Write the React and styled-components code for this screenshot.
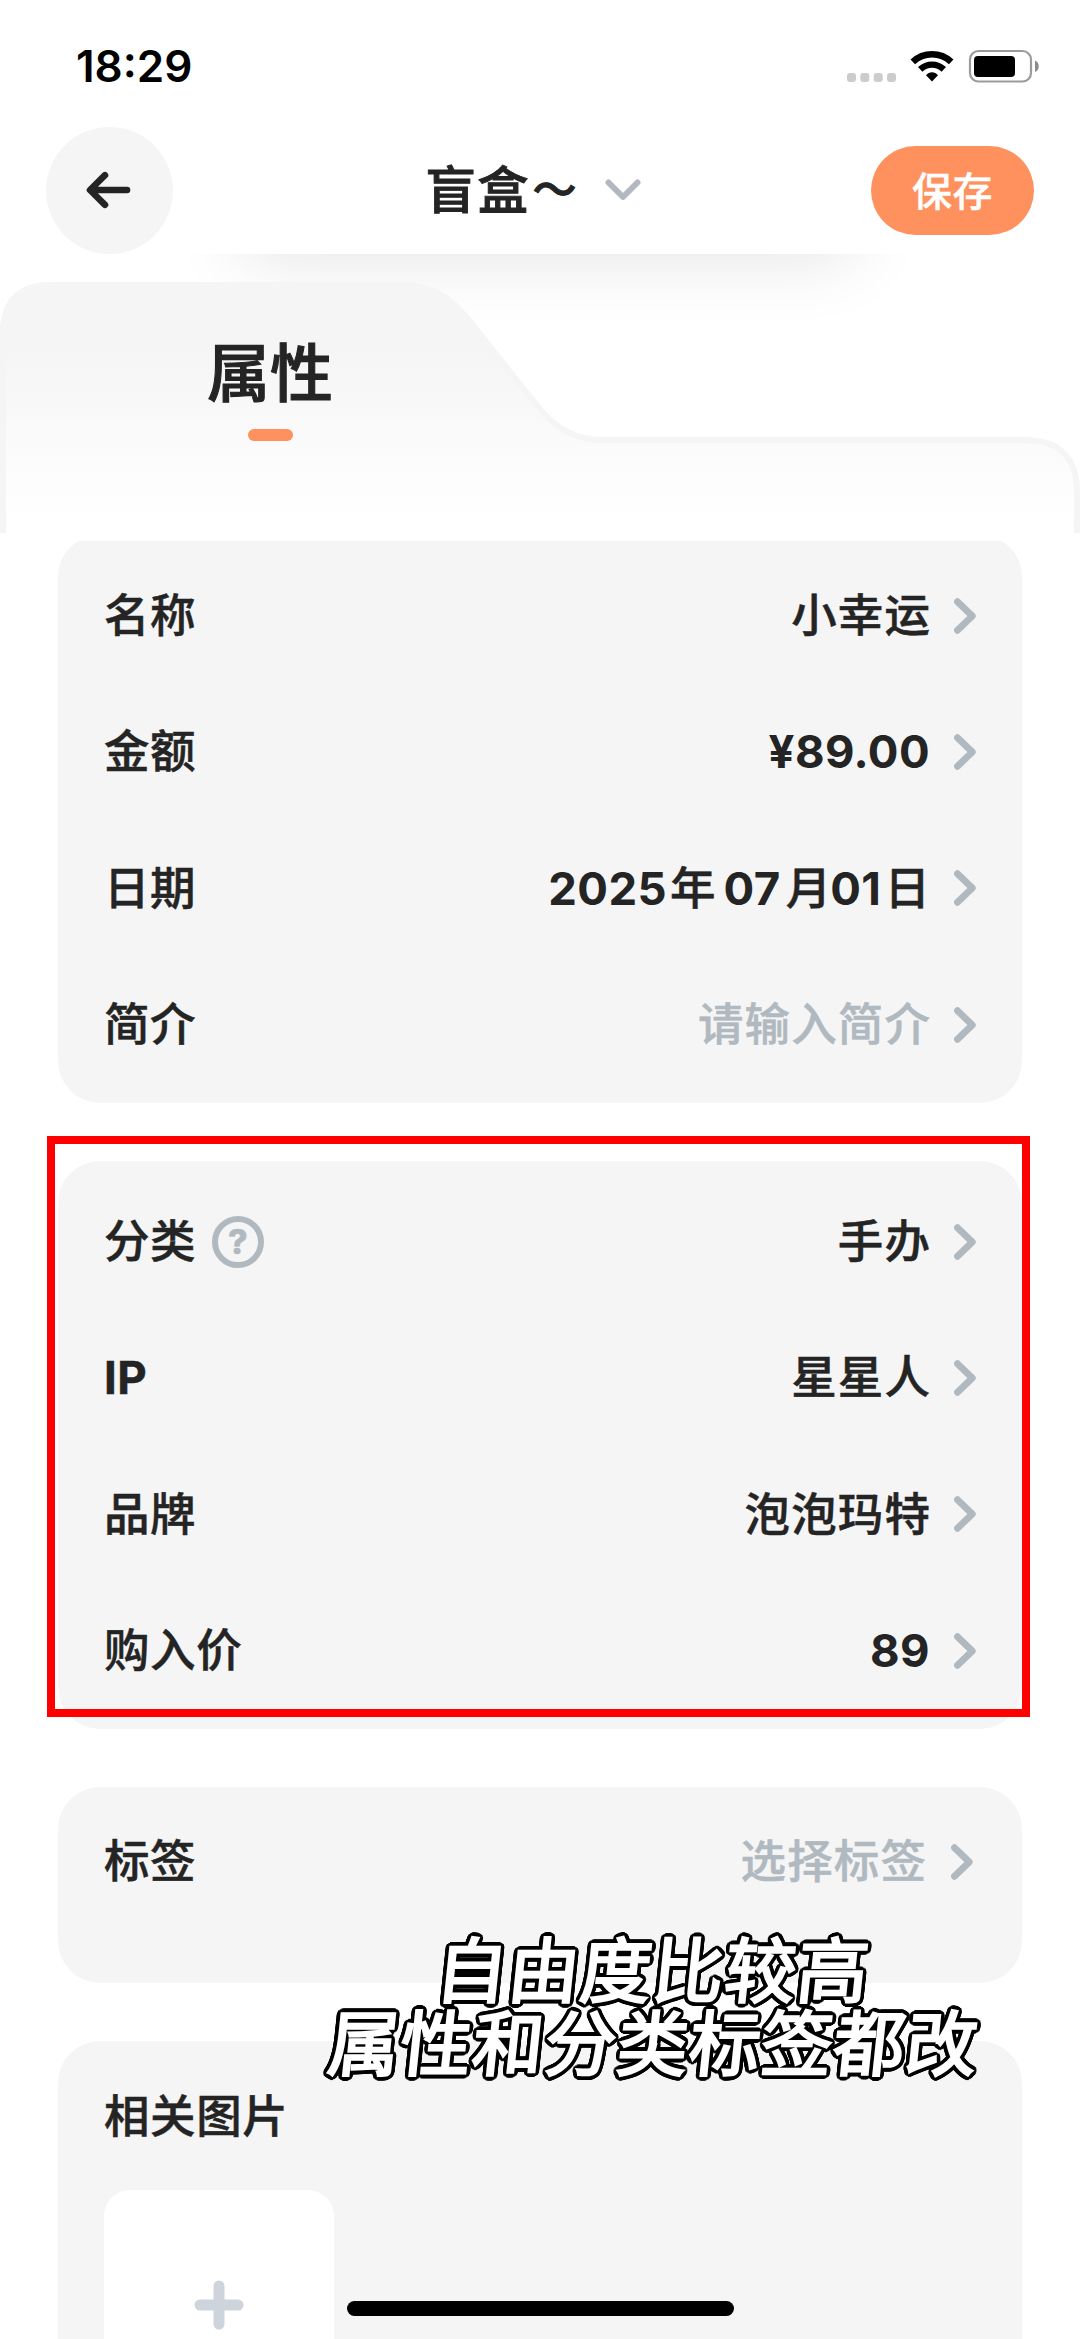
import React from 'react'
import styled, { createGlobalStyle } from 'styled-components'

const GlobalStyle = createGlobalStyle`
  * {
    box-sizing: border-box;
  }
  body {
    margin: 0;
    background-color: #fff;
    font-family: Inter, "Noto Sans CJK SC", sans-serif;
    color: #242424;
  }
`

const colors = {
  accent: '#ff915e',
  card: '#f5f5f5',
  text: '#242424',
  muted: '#b1b9c0',
}

const Screen = styled.div`
  position: relative;
  display: flex;
  flex-direction: column;
  width: 1080px;
  height: 2339px;
  overflow: hidden;
  background-color: #fff;
`

const StatusBar = styled.div`
  display: flex;
  justify-content: space-between;
  align-items: center;
  height: 126px;
  padding: 6px 40px 0 76px;
`

const Time = styled.span`
  font-size: 44px;
  font-weight: 600;
  line-height: 1;
  color: #000;
`

const StatusIcons = styled.div`
  display: flex;
  align-items: center;

  svg {
    display: block;
  }
`

const NavBar = styled.header`
  display: grid;
  grid-template-columns: 1fr auto 1fr;
  align-items: center;
  height: 128px;
  padding: 0 46px;
`

const BackButton = styled.button`
  display: flex;
  align-items: center;
  justify-content: center;
  width: 127px;
  height: 127px;
  padding: 0 3px 0 0;
  border: 0;
  border-radius: 50%;
  background-color: ${colors.card};
`

const NavTitle = styled.div`
  display: flex;
  align-items: center;
  padding-right: 14px;
  font-size: 51px;
  font-weight: 500;
  letter-spacing: 1.2px;
  line-height: 1;
  -webkit-text-stroke: 0.9px currentColor;

  svg {
    margin-left: 27px;
  }
`

const Tilde = styled.span`
  margin-left: 3px;
  font-size: 44px;
`

const SaveButton = styled.button`
  justify-self: end;
  width: 163px;
  height: 89px;
  padding: 0 0 3px;
  border: 0;
  border-radius: 45px;
  background-color: ${colors.accent};
  color: #fff;
  font-family: inherit;
  font-size: 40px;
  font-weight: 500;
  letter-spacing: 0.5px;
  -webkit-text-stroke: 0.4px currentColor;
`

const TabArea = styled.div`
  position: relative;
  flex: none;
  height: 287px;
  overflow: hidden;

  /* soft shadow under the nav bar */
  &::before {
    content: '';
    position: absolute;
    top: -200px;
    left: 242px;
    right: 226px;
    height: 200px;
    box-shadow: 0 0 76px rgba(0, 0, 0, 0.12);
  }
`

const TabShape = styled.svg`
  position: absolute;
  top: 0;
  left: 0;
  display: block;
`

const Tab = styled.div`
  position: relative;
  display: flex;
  flex-direction: column;
  align-items: center;
  width: 540px;
  padding-top: 88px;
  font-size: 63px;
  font-weight: 500;
  line-height: 62px;
  -webkit-text-stroke: 1.1px currentColor;

  &::after {
    content: '';
    width: 45px;
    height: 12px;
    margin-top: 25px;
    border-radius: 6px;
    background-color: ${colors.accent};
  }
`

const CardList = styled.main`
  flex: 1;
  display: flex;
  flex-direction: column;
  gap: 58px;
  overflow: hidden;
  padding: 0 58px;
`

const Card = styled.section`
  flex: none;
  height: ${({ $height }) => $height}px;
  padding: ${({ $top }) => $top || 12.5}px 46px 0;
  border-radius: 42px;
  background-color: ${colors.card};

  /* the list is scrolled a few pixels under the tab */
  &:first-child {
    margin-top: -6px;
  }
`

const RowWrapper = styled.div`
  display: flex;
  align-items: center;
  height: 136.4px;
  padding-right: ${({ $inset }) => $inset || 0}px;
  font-size: 45.5px;
  font-weight: 500;
  line-height: 1;
  -webkit-text-stroke: 0.5px currentColor;

  svg {
    flex: none;
    margin-left: ${({ $inset }) => ($inset ? 24 : 23)}px;
  }
`

const Label = styled.span`
  display: flex;
  align-items: center;
  margin-right: auto;
  font-weight: ${({ $latin }) => ($latin ? 700 : 500)};
  letter-spacing: 0.6px;
`

const Value = styled.span`
  color: ${({ $placeholder }) => ($placeholder ? colors.muted : colors.text)};
  letter-spacing: 1.1px;
`

const Digits = styled.span`
  margin-right: 1px;
  font-weight: 700;
  letter-spacing: 0.4px;
  -webkit-text-stroke: 0;
`

const DateUnit = styled.span`
  margin: 0 ${({ $after }) => $after || 0}px 0 ${({ $before }) => $before || 0}px;
`

const Help = styled.span`
  display: flex;
  align-items: center;
  justify-content: center;
  width: 52px;
  height: 52px;
  margin-left: 16px;
  border: 6px solid ${colors.muted};
  border-radius: 50%;
  color: ${colors.muted};
  font-size: 34px;
  font-weight: 800;
`

const AddTile = styled.button`
  display: flex;
  align-items: center;
  justify-content: center;
  width: 230px;
  height: 230px;
  margin-top: 5px;
  padding: 0;
  border: 0;
  border-radius: 26px;
  background-color: #fff;
`

const Highlight = styled.div`
  position: absolute;
  top: 1136px;
  left: 47px;
  width: 983px;
  height: 581px;
  border: 8px solid #ff0000;
`

// black outline built from shadows placed on a circle
const ring = Array.from({ length: 32 }, (_, i) => {
  const angle = (i / 32) * Math.PI * 2
  return `${(Math.cos(angle) * 4.8).toFixed(2)}px ${(Math.sin(angle) * 4.8).toFixed(2)}px 0 #000`
}).join(', ')

const Caption = styled.div`
  position: absolute;
  top: 1930px;
  left: 324px;
  width: 660px;
`

const CaptionLine = styled.div`
  margin-left: ${({ $shift }) => $shift || 0}px;
  text-align: center;
  color: #fff;
  font-family: "Noto Sans CJK SC", sans-serif;
  font-size: 71px;
  font-weight: 400;
  line-height: 73px;
  letter-spacing: 1.2px;
  white-space: nowrap;
  -webkit-text-stroke: 2.6px #fff;
  stroke-linejoin: round;
  text-shadow: ${ring};
  transform: skewX(-6deg);
`

const HomeIndicator = styled.div`
  position: absolute;
  bottom: 23px;
  left: 347px;
  width: 387px;
  height: 15px;
  border-radius: 8px;
  background-color: #000;
`

const Chevron = () => (
  <svg width="22" height="36" viewBox="0 0 22 36" fill="none">
    <path d="M3.5 3.7 18.3 18 3.5 32.3" stroke={colors.muted} strokeWidth="6.8" strokeLinecap="round" strokeLinejoin="round" />
  </svg>
)

const Row = ({ label, latin, help, inset, placeholder, children }) => (
  <RowWrapper $inset={inset}>
    <Label $latin={latin}>
      {label}
      {help && <Help>?</Help>}
    </Label>
    <Value $placeholder={placeholder}>{children}</Value>
    <Chevron />
  </RowWrapper>
)

const App = () => {
  return (
    <Screen>
      <GlobalStyle />
      <StatusBar>
        <Time>18:29</Time>
        <StatusIcons>
          <svg width="194" height="34" viewBox="846 49 194 34">
            <g fill="#cccccc">
              <rect x="847" y="73" width="9" height="9" rx="3" />
              <rect x="860.3" y="73" width="9" height="9" rx="3" />
              <rect x="873.7" y="73" width="9" height="9" rx="3" />
              <rect x="887" y="73" width="9" height="9" rx="3" />
            </g>
            <g fill="none" stroke="#000">
              <path d="M912.8 61.8a28.2 28.2 0 0 1 38.4 0" strokeWidth="6.6" />
              <path d="M920.2 69.3a17.2 17.2 0 0 1 23.6 0" strokeWidth="6.4" />
            </g>
            <path d="M932 81.5l-6-6.2c3.2-4 8.8-4 12 0z" fill="#000" />
            <rect x="970" y="51" width="61" height="30.5" rx="8.5" fill="none" stroke="#9b9b9b" strokeWidth="2.2" />
            <rect x="974" y="56" width="41" height="21" rx="4" />
            <path d="M1035 60.5c5 2 5 9.5 0 11.5z" fill="#8c8c8c" />
          </svg>
        </StatusIcons>
      </StatusBar>

      <NavBar>
        <BackButton>
          <svg width="46" height="38" viewBox="0 0 46 38" fill="none" stroke="#242424" strokeWidth="6.6" strokeLinecap="round" strokeLinejoin="round">
            <path d="M20 4.2 5 19 20 33.8M5.5 19h36.5" />
          </svg>
        </BackButton>
        <NavTitle>
          盲盒<Tilde>～</Tilde>
          <svg width="36" height="22" viewBox="0 0 36 22" fill="none">
            <path d="M3.5 3.5 18 18 32.5 3.5" stroke="#b3b8c0" strokeWidth="6" strokeLinecap="round" strokeLinejoin="round" />
          </svg>
        </NavTitle>
        <SaveButton>保存</SaveButton>
      </NavBar>

      <TabArea>
        <TabShape width="1080" height="287" viewBox="0 254 1080 287">
          <defs>
            <linearGradient id="tabFill" gradientUnits="userSpaceOnUse" x1="0" y1="350" x2="0" y2="520">
              <stop offset="0" stopColor="#f5f5f5" />
              <stop offset="1" stopColor="#ffffff" />
            </linearGradient>
            <clipPath id="tabClip">
              <path d="M0 533V334Q0 282 52 282H400C440 282 458 302 474 322L541 406Q566 437 602 437H1024Q1080 437 1080 493V533z" />
            </clipPath>
          </defs>
          <g clipPath="url(#tabClip)">
            <rect x="0" y="282" width="1080" height="251" fill="url(#tabFill)" />
            <path d="M0 560V334Q0 282 52 282H400C440 282 458 302 474 322L541 406Q566 437 602 437H1024Q1080 437 1080 493V560" fill="none" stroke="#f5f5f5" strokeWidth="12" />
          </g>
        </TabShape>
        <Tab>属性</Tab>
      </TabArea>

      <CardList>
        <Card $height={568}>
          <Row label="名称">小幸运</Row>
          <Row label="金额"><Digits>¥89.00</Digits></Row>
          <Row label="日期">
            <Digits>2025</Digits>
            <DateUnit $before={2} $after={7}>年</DateUnit>
            <Digits>07</Digits>
            <DateUnit $before={4} $after={-2}>月</DateUnit>
            <Digits>01</Digits>
            <DateUnit $before={2}>日</DateUnit>
          </Row>
          <Row label="简介" placeholder>请输入简介</Row>
        </Card>
        <Card $height={568}>
          <Row label="分类" help>手办</Row>
          <Row label="IP" latin>星星人</Row>
          <Row label="品牌">泡泡玛特</Row>
          <Row label="购入价"><Digits>89</Digits></Row>
        </Card>
        <Card $height={196} $top={6.5}>
          <Row label="标签" placeholder inset={3}>选择标签</Row>
        </Card>
        <Card $height={420} $top={7.5}>
          <RowWrapper>
            <Label>相关图片</Label>
          </RowWrapper>
          <AddTile>
            <svg width="50" height="50" viewBox="0 0 50 50" fill="none" stroke="#cdd4dc" strokeWidth="11" strokeLinecap="round">
              <path d="M25 6v38M6 25h38" />
            </svg>
          </AddTile>
        </Card>
      </CardList>

      <Highlight />
      <Caption>
        <CaptionLine $shift={-1}>自由度比较高</CaptionLine>
        <CaptionLine>属性和分类标签都改</CaptionLine>
      </Caption>
      <HomeIndicator />
    </Screen>
  )
}

export default App
